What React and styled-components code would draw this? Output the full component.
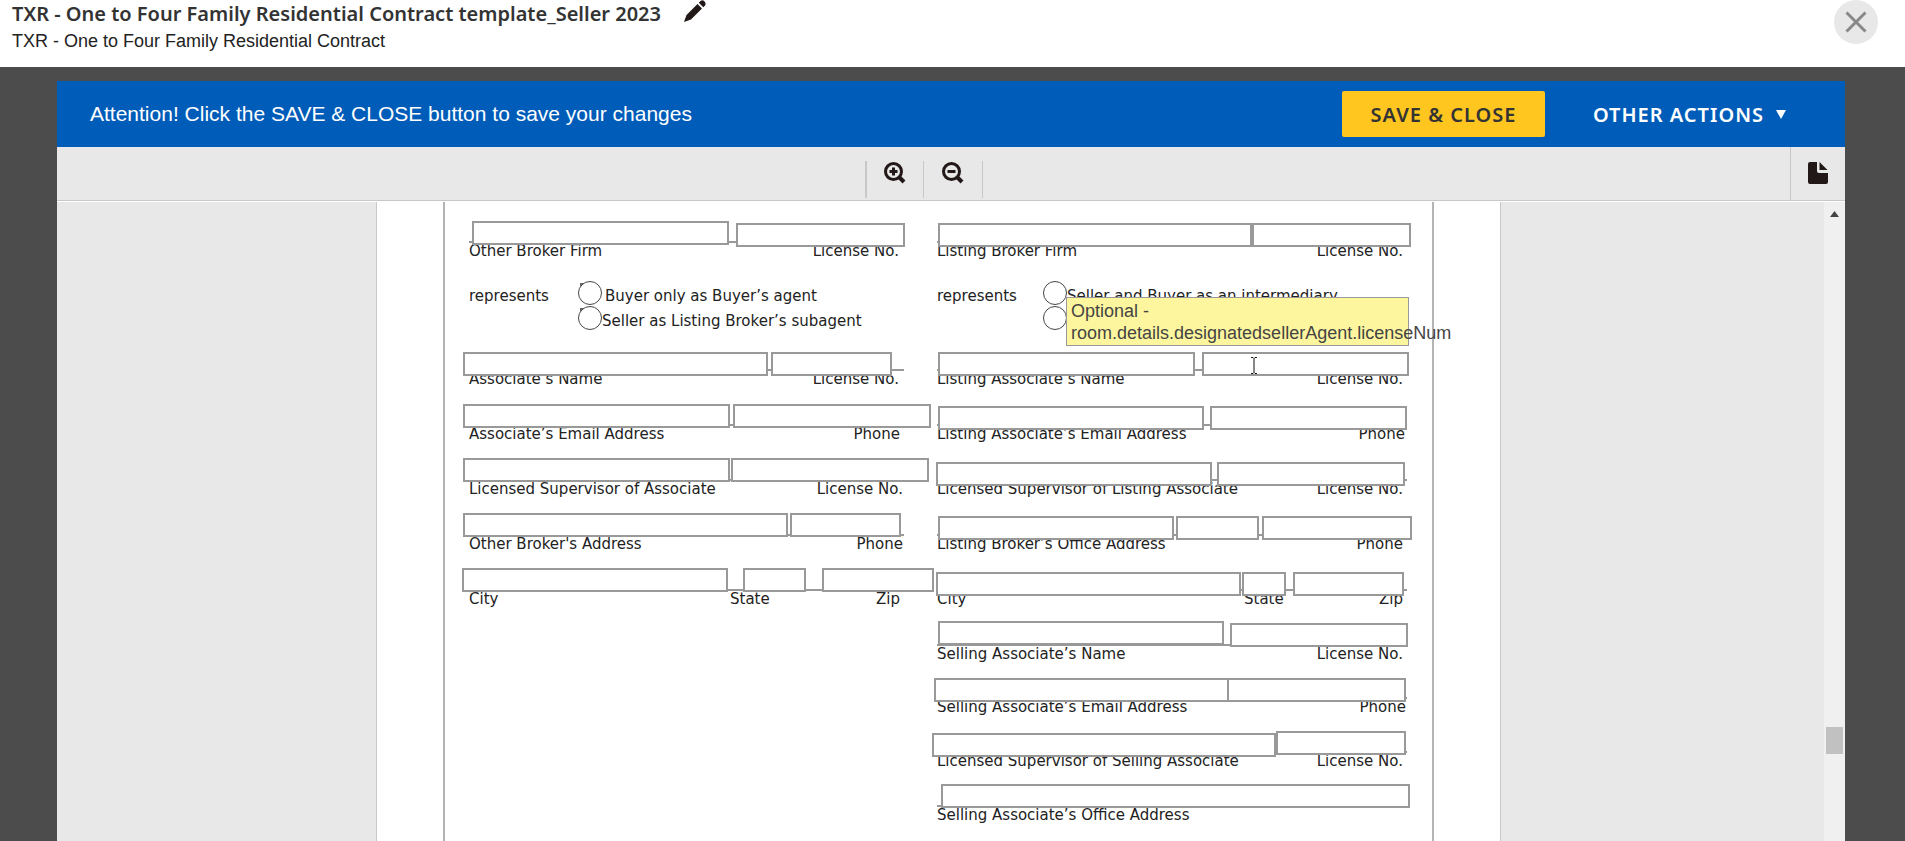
import React from 'react';
import styled, { createGlobalStyle } from 'styled-components';

const brokerRows = [
  {
    id: 'other-firm',
    height: 57,
    labels: [{ text: 'Other Broker Firm' }, { text: 'License No.' }],
    end: 5,
    fields: [
      { gap: 10, width: 257, drop: 19 },
      { gap: 7, width: 169, drop: 21 },
    ],
  },
  {
    id: 'other-represents',
    indent: 109,
    boxed: true,
    choices: [
      { text: 'Buyer only as Buyer’s agent', gap: 3 },
      { text: 'Seller as Listing Broker’s subagent' },
    ],
  },
  {
    id: 'associate-name',
    labels: [{ text: 'Associate’s Name' }, { text: 'License No.' }],
    end: 5,
    fields: [
      { gap: 1, width: 305, drop: 20 },
      { gap: 3, width: 121, drop: 20 },
    ],
  },
  {
    id: 'associate-email',
    labels: [{ text: 'Associate’s Email Address' }, { text: 'Phone' }],
    fields: [
      { gap: 1, width: 267, drop: 17 },
      { gap: 3, width: 198, drop: 17 },
    ],
  },
  {
    id: 'associate-supervisor',
    labels: [
      { text: 'Licensed Supervisor of Associate' },
      { text: 'License No.' },
    ],
    end: 1,
    fields: [
      { gap: 1, width: 267, drop: 16 },
      { gap: 1, width: 198, drop: 16 },
    ],
  },
  {
    id: 'other-address',
    labels: [{ text: 'Other Broker\'s Address' }, { text: 'Phone' }],
    end: 1,
    fields: [
      { gap: 1, width: 325, drop: 16 },
      { gap: 2, width: 111, drop: 16 },
    ],
  },
  {
    id: 'other-city',
    labels: [{ text: 'City', width: 261 }, { text: 'State' }, { text: 'Zip' }],
    fields: [
      { gap: 0, width: 266, drop: 16 },
      { gap: 15, width: 63, drop: 16 },
      { gap: 16, width: 112, drop: 16 },
    ],
  },
];

const listingRows = [
  {
    id: 'listing-firm',
    height: 57,
    labels: [{ text: 'Listing Broker Firm' }, { text: 'License No.' }],
    fields: [
      { gap: 8, width: 314, drop: 21 },
      { gap: 0, width: 159, drop: 21 },
    ],
  },
  {
    id: 'listing-represents',
    indent: 106,
    choices: [{ text: 'Seller and Buyer as an intermediary' }, { name: 'Seller' }],
  },
  {
    id: 'listing-name',
    labels: [{ text: 'Listing Associate’s Name' }, { text: 'License No.' }],
    hint: ['Optional -', 'room.details.designatedsellerAgent.licenseNum'],
    fields: [
      { gap: 8, width: 257, drop: 20 },
      { gap: 7, width: 207, drop: 20 },
    ],
  },
  {
    id: 'listing-email',
    labels: [{ text: 'Listing Associate’s Email Address' }, { text: 'Phone' }],
    end: 2,
    fields: [
      { gap: 8, width: 266, drop: 19 },
      { gap: 6, width: 197, drop: 19 },
    ],
  },
  {
    id: 'listing-supervisor',
    labels: [
      { text: 'Licensed Supervisor of Listing Associate' },
      { text: 'License No.' },
    ],
    fields: [
      { gap: 6, width: 276, drop: 20 },
      { gap: 5, width: 188, drop: 20 },
    ],
  },
  {
    id: 'listing-address',
    labels: [{ text: 'Listing Broker’s Office Address' }, { text: 'Phone' }],
    fields: [
      { gap: 8, width: 236, drop: 19 },
      { gap: 2, width: 83, drop: 19 },
      { gap: 3, width: 150, drop: 19 },
    ],
  },
  {
    id: 'listing-city',
    labels: [{ text: 'City', width: 307 }, { text: 'State' }, { text: 'Zip' }],
    fields: [
      { gap: 6, width: 305, drop: 20 },
      { gap: 1, width: 44, drop: 20 },
      { gap: 7, width: 111, drop: 20 },
    ],
  },
  {
    id: 'selling-name',
    labels: [{ text: 'Selling Associate’s Name' }, { text: 'License No.' }],
    fields: [
      { gap: 8, width: 286, drop: 14 },
      { gap: 6, width: 178, drop: 16 },
    ],
  },
  {
    id: 'selling-email',
    height: 53,
    labels: [{ text: 'Selling Associate’s Email Address' }, { text: 'Phone' }],
    end: 1,
    fields: [
      { gap: 4, width: 295, drop: 16 },
      { gap: -2, width: 179, drop: 16 },
    ],
  },
  {
    id: 'selling-supervisor',
    height: 54,
    labels: [
      { text: 'Licensed Supervisor of Selling Associate' },
      { text: 'License No.' },
    ],
    fields: [
      { gap: 2, width: 344, drop: 18 },
      { gap: 0, width: 130, drop: 16 },
    ],
  },
  {
    id: 'selling-address',
    height: 54,
    labels: [{ text: 'Selling Associate’s Office Address' }],
    fields: [{ gap: 11, width: 469, drop: 15 }],
  },
];

const Represents = ({ row }) => (
  <RepresentsRow role="radiogroup" aria-labelledby={row.id}>
    <RepresentsTitle id={row.id} $width={row.indent}>
      represents
    </RepresentsTitle>
    <div>
      {row.choices.map((choice, index) => (
        <Choice key={index} $gap={choice.gap} $boxed={row.boxed}>
          <Radio type="radio" name={row.id} aria-label={choice.name} />
          {choice.text && <span>{choice.text}</span>}
        </Choice>
      ))}
    </div>
  </RepresentsRow>
);

const Entry = ({ row }) => {
  const last = row.labels.length - 1;
  return (
    <EntryRow $height={row.height}>
      <Captions $end={row.end}>
        {row.labels.map((label, index) => (
          <Caption
            key={label.text}
            id={`${row.id}-label-${index}`}
            htmlFor={`${row.id}-${index}`}
            $width={label.width}
          >
            {label.text}
          </Caption>
        ))}
      </Captions>
      <Fields>
        {row.fields.map((field, index) => (
          <Field
            key={index}
            type="text"
            id={`${row.id}-${index}`}
            aria-labelledby={`${row.id}-label-${Math.min(index, last)}`}
            $gap={field.gap}
            $width={field.width}
            $drop={field.drop}
          />
        ))}
      </Fields>
      {row.hint && (
        <>
          <Hint role="tooltip">
            {row.hint.map((line) => (
              <div key={line}>{line}</div>
            ))}
          </Hint>
          <TextCursor viewBox="0 0 8 17" aria-hidden="true">
            <path d="M1 .5h2l1 1 1-1h2M4 1.500v14M1 16.500h2l1-1 1 1h2" />
          </TextCursor>
        </>
      )}
    </EntryRow>
  );
};

const Column = ({ rows }) => (
  <div>
    {rows.map((row) =>
      row.fields ? (
        <Entry key={row.id} row={row} />
      ) : (
        <Represents key={row.id} row={row} />
      )
    )}
  </div>
);

const App = () => {
  return (
    <>
      <GlobalStyle />
      <Screen>
        <Header>
          <div>
            <TitleRow>
              <Title>
                TXR - One to Four Family Residential Contract template_Seller
                2023
              </Title>
              <IconButton aria-label="Rename">
                <svg width="24" height="24" viewBox="0 0 24 24">
                  <path d="M1 22l2.500-7L14.500 4l4.500 4.500L8 19.500z" />
                  <path d="M15.800 2.700L17.500 1q2-1.500 4 .5t.500 4l-1.700 1.700z" />
                </svg>
              </IconButton>
            </TitleRow>
            <Subtitle>TXR - One to Four Family Residential Contract</Subtitle>
          </div>
          <CloseButton aria-label="Close">
            <svg width="22" height="22" viewBox="0 0 22 22">
              <path d="M1.500 1.500l19 19M20.500 1.500l-19 19" />
            </svg>
          </CloseButton>
        </Header>
        <Viewer>
          <Banner>
            <Notice>
              Attention! Click the SAVE &amp; CLOSE button to save your changes
            </Notice>
            <SaveButton>SAVE &amp; CLOSE</SaveButton>
            <ActionsButton>
              OTHER ACTIONS
              <svg width="10" height="9" viewBox="0 0 10 9">
                <path d="M0 0h10L5 9z" />
              </svg>
            </ActionsButton>
          </Banner>
          <Toolbar>
            <ZoomTools>
              <ZoomButton aria-label="Zoom in" $first>
                <svg width="22" height="22" viewBox="0 0 22 22">
                  <circle cx="9.500" cy="9.500" r="8" />
                  <path d="M5.500 9.500h8M9.500 5.500v8" />
                  <path className="handle" d="M15.500 15.500l4.500 4.500" />
                </svg>
              </ZoomButton>
              <ZoomButton aria-label="Zoom out">
                <svg width="22" height="22" viewBox="0 0 22 22">
                  <circle cx="9.500" cy="9.500" r="8" />
                  <path d="M5.500 9.500h8" />
                  <path className="handle" d="M15.500 15.500l4.500 4.500" />
                </svg>
              </ZoomButton>
            </ZoomTools>
            <PagesButton aria-label="Pages">
              <svg width="20" height="22" viewBox="0 0 20 22">
                <path d="M2 0h7v9q0 2 2 2h9v9q0 2-2 2H2q-2 0-2-2V2q0-2 2-2z" />
                <path d="M11.500 0l8 8h-8z" />
              </svg>
            </PagesButton>
          </Toolbar>
          <Stage>
            <Desk>
              <Page>
                <Frame>
                  <Column rows={brokerRows} />
                  <Column rows={listingRows} />
                </Frame>
              </Page>
            </Desk>
            <Scrollbar aria-hidden="true">
              <svg width="9" height="6" viewBox="0 0 9 6">
                <path d="M0 6h9L4.500 0z" />
              </svg>
              <Thumb />
            </Scrollbar>
          </Stage>
        </Viewer>
      </Screen>
    </>
  );
};

const GlobalStyle = createGlobalStyle`
  * {
    box-sizing: border-box;
  }
  body {
    margin: 0;
    font-family: 'Liberation Sans', Arial, sans-serif;
    background: #4c4c4c;
  }
  button {
    border: 0;
    padding: 0;
    background: none;
    font-family: 'Noto Sans', sans-serif;
    cursor: pointer;
  }
  svg {
    display: block;
    flex: none;
  }
`;

const Screen = styled.div`
  display: flex;
  flex-direction: column;
  height: 100vh;
  overflow: hidden;
`;

const Header = styled.header`
  display: flex;
  justify-content: space-between;
  align-items: flex-start;
  height: 67px;
  padding: 0 27px 0 12px;
  background: #fff;
`;

const TitleRow = styled.div`
  display: flex;
  align-items: flex-start;
  gap: 22px;
`;

const Title = styled.h1`
  margin: 0;
  font-family: 'Noto Sans', sans-serif;
  font-size: 20px;
  font-weight: 600;
  line-height: 28px;
  color: #333;
`;

const Subtitle = styled.div`
  font-size: 18px;
  line-height: 26px;
  color: #222;
`;

const IconButton = styled.button`
  svg {
    fill: #231818;
  }
`;

const CloseButton = styled.button`
  display: flex;
  align-items: center;
  justify-content: center;
  width: 44px;
  height: 44px;
  border-radius: 50%;
  background: #e8e8e8;
  svg {
    stroke: #888;
    stroke-width: 3;
  }
`;

const Viewer = styled.main`
  display: flex;
  flex-direction: column;
  flex: 1;
  min-height: 0;
  margin: 14px 60px 0 57px;
`;

const Banner = styled.div`
  display: flex;
  align-items: center;
  flex: none;
  height: 66px;
  padding: 0 59px 0 33px;
  background: #005cb9;
`;

const Notice = styled.p`
  flex: 1;
  margin: 0;
  font-size: 21px;
  line-height: 24px;
  color: #fff;
`;

const SaveButton = styled.button`
  width: 203px;
  height: 46px;
  border-radius: 2px;
  background: #ffc620;
  font-size: 20px;
  font-weight: 600;
  letter-spacing: 1px;
  color: #333;
`;

const ActionsButton = styled.button`
  display: flex;
  align-items: center;
  gap: 12px;
  margin-left: 48px;
  font-size: 20px;
  font-weight: 600;
  letter-spacing: 1px;
  color: #fff;
  svg {
    fill: #fff;
  }
`;

const Toolbar = styled.div`
  display: flex;
  flex: none;
  height: 54px;
  border-bottom: 1px solid #c8c8c8;
  background: #e8e8e8;
`;

const ZoomTools = styled.div`
  display: flex;
  flex: 1;
  align-items: flex-start;
  justify-content: center;
  padding-top: 14px;
`;

const ZoomButton = styled.button`
  display: flex;
  justify-content: center;
  width: 59px;
  height: 37px;
  padding-top: 1px;
  border-left: ${({ $first }) => ($first ? '2px solid #c8c8c8' : '0')};
  border-right: 1px solid #c8c8c8;
  svg {
    fill: none;
    stroke: #231818;
    stroke-width: 3;
  }
  .handle {
    stroke-width: 4;
  }
`;

const PagesButton = styled.button`
  display: flex;
  justify-content: center;
  width: 55px;
  padding-top: 15px;
  border-left: 1px solid #c8c8c8;
  svg {
    fill: #231818;
  }
`;

const Stage = styled.div`
  display: flex;
  flex: 1;
  min-height: 0;
  border-top: 1px solid #fff;
`;

const Desk = styled.div`
  display: flex;
  flex: 1;
  justify-content: center;
  padding-right: 4px;
  overflow: hidden;
  background: #e8e8e8;
`;

const Page = styled.div`
  flex: none;
  padding: 0 66px;
  border: solid #c8c8c8;
  border-width: 0 1px;
  background: #fff;
`;

const Frame = styled.form`
  display: grid;
  grid-template-columns: 435px 470px;
  column-gap: 33px;
  height: 100%;
  padding: 0 25px 0 24px;
  border: solid #b4b4b4;
  border-width: 0 2px;
  align-content: start;
  font-family: 'DejaVu Sans', Verdana, sans-serif;
  font-size: 15px;
  color: #222;
`;

/* captions and fields share one cell, the fields lie over the captions */
const EntryRow = styled.div`
  display: grid;
  grid-template-columns: minmax(0, 1fr);
  position: relative;
  height: ${({ $height = 55 }) => $height}px;
  > * {
    grid-area: 1 / 1;
  }
`;

const Captions = styled.div`
  display: flex;
  align-self: end;
  padding-right: ${({ $end = 4 }) => $end}px;
  border-top: 2px solid #999;
  line-height: 16px;
`;

const Caption = styled.label`
  width: ${({ $width }) => ($width ? `${$width}px` : 'auto')};
  white-space: nowrap;
  &:last-child:not(:first-child) {
    margin-left: auto;
  }
`;

const Fields = styled.div`
  display: flex;
  align-items: flex-start;
  margin-left: -7px;
  z-index: 1;
`;

const Field = styled.input`
  flex: none;
  width: ${({ $width }) => $width}px;
  height: 24px;
  margin: ${({ $drop, $gap }) => `${$drop}px 0 0 ${$gap}px`};
  padding: 0 4px;
  border: 2px solid #999;
  border-radius: 0;
  background: #fff;
  font-size: 15px;
  outline: 0;
`;

const RepresentsRow = styled.div`
  display: flex;
  height: 73px;
  padding-top: 22px;
  line-height: 30px;
`;

const RepresentsTitle = styled.span`
  width: ${({ $width }) => $width}px;
`;

/* the corner of the printed tick box shows behind the radio */
const Choice = styled.label`
  display: flex;
  gap: ${({ $gap = 0 }) => $gap}px;
  height: 25px;
  white-space: nowrap;
  background: ${({ $boxed }) =>
    $boxed
      ? 'linear-gradient(#666, #666) 2px 2px / 4px 2px no-repeat, linear-gradient(#666, #666) 2px 2px / 1px 4px no-repeat'
      : 'none'};
`;

const Radio = styled.input`
  flex: none;
  width: 24px;
  height: 24px;
  margin: 0;
  appearance: none;
  border: 1px solid #444;
  border-radius: 50%;
  background: #fff;
`;

const Hint = styled.div`
  position: absolute;
  top: -35px;
  right: -2px;
  width: 343px;
  height: 49px;
  padding: 2px 4px;
  z-index: 3;
  border: 1px solid #999;
  background: #fef69e;
  font-family: 'Liberation Sans', Arial, sans-serif;
  font-size: 18px;
  line-height: 22px;
  color: #444;
`;

const TextCursor = styled.svg`
  position: absolute;
  top: 25px;
  right: 149px;
  width: 8px;
  height: 17px;
  z-index: 2;
  fill: none;
  stroke: #111;
`;

const Scrollbar = styled.div`
  display: flex;
  flex-direction: column;
  align-items: center;
  width: 21px;
  padding-top: 9px;
  background: #f0f0f0;
  svg {
    fill: #444;
  }
`;

const Thumb = styled.div`
  width: 17px;
  height: 27px;
  margin-top: 510px;
  background: #c1c1c1;
`;

export default App;
